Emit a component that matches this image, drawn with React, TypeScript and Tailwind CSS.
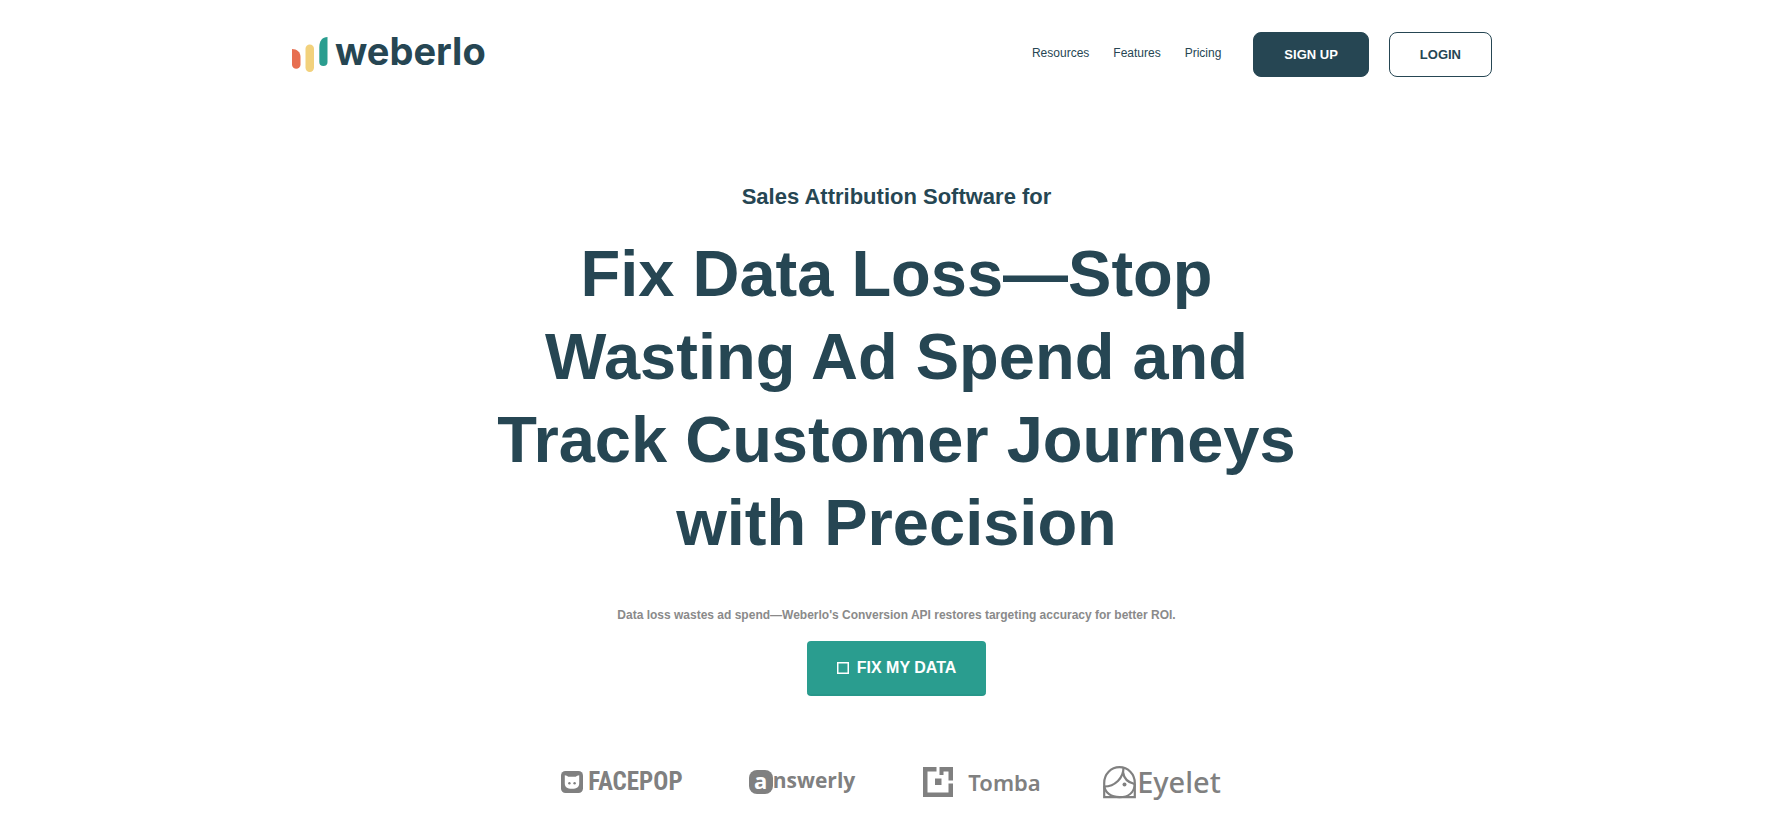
import type { ReactNode } from "react";

const navLinks = ["Resources", "Features", "Pricing"];

function WeberloLogo() {
  return (
    <a href="#" aria-label="weberlo" className="flex items-start gap-[7px] text-[#264653]">
      <svg viewBox="0 0 36 36" className="mt-px size-9" aria-hidden="true">
        <path d="M0 12c5 0 8.500 3 8.500 8v7.500a4.200 4.200 0 0 1-8.500 0z" fill="#e76f51" />
        <rect x="13.500" y="7.500" width="8.500" height="27.500" rx="4.200" fill="#f2d17c" />
        <path d="M35.500 0v25a4.100 4.100 0 0 1-8.200 0V10c0-6 3-10 8.200-10z" fill="#2a9d8f" />
      </svg>
      <span className="font-['Inter',sans-serif] text-[38px] leading-[30px] font-bold">weberlo</span>
    </a>
  );
}

function FacepopMark() {
  return (
    <svg viewBox="0 0 22 22" className="size-[22px]" aria-hidden="true">
      <rect width="22" height="22" rx="4.500" fill="#808080" />
      <path
        d="M3.800 4.200c1.500 0 2.500.8 3.500 1.600h7.400c1-.8 2-1.600 3.500-1.600v8.300c0 3.600-2.400 5.300-7.200 5.300s-7.200-1.700-7.200-5.300z"
        fill="#fff"
      />
      <circle cx="8.400" cy="12.200" r="1.200" fill="#808080" />
      <circle cx="13.600" cy="12.200" r="1.200" fill="#808080" />
    </svg>
  );
}

function TombaMark() {
  return (
    <svg viewBox="0 0 30 30" className="size-[30px]" fill="#808080" aria-hidden="true">
      <path d="M0 0h13.500v4.500h-9v21h21V16.500H30V30H0z" />
      <path d="M16.500 0H30v13.500h-4.500v-9h-5V8h-4z" />
      <path d="M12 11.500h6.500V18H12z" />
    </svg>
  );
}

function EyeletMark() {
  return (
    <svg viewBox="0 0 33 33" className="size-[33px]" fill="none" stroke="#808080" strokeWidth="2.200" aria-hidden="true">
      <path d="M1.200 31.200V17C1.200 8 8 1.200 16.500 1.200S31.800 8 31.800 17v14.200z" />
      <path d="M20.500 1.800C20.500 12 12 20.500 1.200 20.500M20 6c.8 6 5 10.500 11.500 12" />
      <path d="M1.200 20c1 7 7 11.200 15.300 11.200S31.300 27 31.800 18" />
      <circle cx="21.500" cy="18.500" r="2" fill="#808080" stroke="none" />
    </svg>
  );
}

function Brand({ children }: { children: ReactNode }) {
  return <li className="flex h-10 items-center justify-center text-[#808080]">{children}</li>;
}

export default function App() {
  return (
    <div className="bg-white font-['Liberation_Sans',Arial,sans-serif] text-[#264653]">
      <header className="mx-auto flex max-w-[1200px] items-start justify-between pt-8">
        <div className="pt-1">
          <WeberloLogo />
        </div>
        <div className="flex items-center">
          <nav aria-label="Main" className="mr-8 flex gap-6 pb-1">
            {navLinks.map((label) => (
              <a key={label} href="#" className="text-xs">
                {label}
              </a>
            ))}
          </nav>
          <div className="flex gap-5 text-[13px] leading-[19px] font-bold">
            <a href="#" className="rounded-lg border border-[#264653] bg-[#264653] px-[30px] py-3 text-white">
              SIGN UP
            </a>
            <a href="#" className="rounded-lg border border-[#264653] px-[30px] py-3">
              LOGIN
            </a>
          </div>
        </div>
      </header>

      <main className="mx-auto max-w-[1200px] pt-[104px] text-center">
        <div className="flex flex-col items-center pl-[9px]">
          <h2 className="text-[22px] leading-8 font-bold">Sales Attribution Software for</h2>
          <h1 className="mt-[19px] max-w-[820px] text-[65px] leading-[83px] font-bold">
            Fix Data Loss—Stop Wasting Ad Spend and Track Customer Journeys with Precision
          </h1>
          <p className="mt-[41px] text-xs leading-5 font-bold text-[#8a8a8a]">
            Data loss wastes ad spend—Weberlo's Conversion API restores targeting accuracy for better ROI.
          </p>
          <button
            type="button"
            className="mt-4 flex items-center gap-2 rounded border-b-2 border-[#27978a] bg-[#2a9d8f] px-[30px] pt-4 pb-[15px] text-base leading-[22px] font-bold text-white"
          >
            <svg viewBox="0 0 12 12" className="size-3" fill="none" stroke="currentColor" strokeWidth="1.500" aria-hidden="true">
              <rect x="0.750" y="0.750" width="10.500" height="10.500" />
            </svg>
            FIX MY DATA
          </button>
        </div>

        <ul className="mx-auto mt-[66px] grid max-w-[720px] grid-cols-4" aria-label="Customers">
          <Brand>
            <FacepopMark />
            <span className="ml-[5px] font-['Roboto_Condensed','Roboto',sans-serif] text-[25px] font-bold">FACEPOP</span>
          </Brand>
          <Brand>
            <span className="flex h-6 w-6 items-center justify-center rounded-lg bg-[#808080] pb-1 font-['Open_Sans',sans-serif] text-[22px] leading-5 font-bold text-white">
              a
            </span>
            <span className="pb-1 font-['Open_Sans',sans-serif] text-[21px] leading-6 font-bold">nswerly</span>
          </Brand>
          <Brand>
            <TombaMark />
            <span className="ml-[15px] font-['Noto_Sans',sans-serif] text-[22px] font-semibold">Tomba</span>
          </Brand>
          <Brand>
            <EyeletMark />
            <span className="ml-px font-['Noto_Sans',sans-serif] text-[29px] font-medium">Eyelet</span>
          </Brand>
        </ul>
      </main>
    </div>
  );
}
